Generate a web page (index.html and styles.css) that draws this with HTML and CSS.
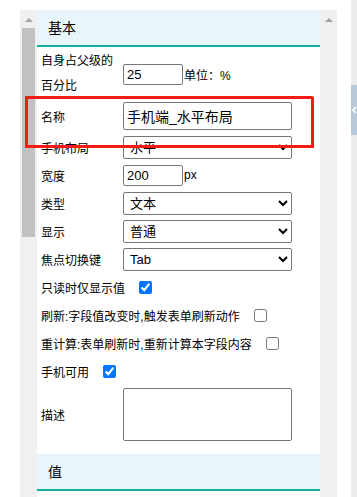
FILE: index.html
```html
<!DOCTYPE html>
<html lang="zh-CN">
<head>
    <meta charset="UTF-8">
    <title>字段属性</title>
    <link rel="stylesheet" href="styles.css">
</head>
<body>
<div class="page">
    <div class="frame">
        <div class="gutter"></div>
        <div class="scroll">
            <span class="arrow"></span>
            <span class="thumb"></span>
        </div>
        <div class="panel">
            <div class="title">基本</div>
            <div class="form">
                <div class="row row-tall">
                    <label class="label label-wrap">自身占父级的百分比</label>
                    <input class="ipt ipt-short" type="text" value="25">
                    <span class="unit">单位：%</span>
                </div>
                <div class="row row-name">
                    <label class="label">名称</label>
                    <input class="ipt ipt-name" type="text" value="手机端_水平布局">
                </div>
                <div class="row">
                    <label class="label">手机布局</label>
                    <select class="sel"><option>水平</option></select>
                </div>
                <div class="row">
                    <label class="label">宽度</label>
                    <input class="ipt ipt-short" type="text" value="200">
                    <span class="unit">px</span>
                </div>
                <div class="row">
                    <label class="label">类型</label>
                    <select class="sel"><option>文本</option></select>
                </div>
                <div class="row">
                    <label class="label">显示</label>
                    <select class="sel"><option>普通</option></select>
                </div>
                <div class="row">
                    <label class="label">焦点切换键</label>
                    <select class="sel"><option>Tab</option></select>
                </div>
                <div class="row">
                    <span class="text">只读时仅显示值</span>
                    <input class="chk" type="checkbox" checked>
                </div>
                <div class="row">
                    <span class="text">刷新:字段值改变时,触发表单刷新动作</span>
                    <input class="chk" type="checkbox">
                </div>
                <div class="row">
                    <span class="text">重计算:表单刷新时,重新计算本字段内容</span>
                    <input class="chk" type="checkbox">
                </div>
                <div class="row">
                    <span class="text">手机可用</span>
                    <input class="chk" type="checkbox" checked>
                </div>
                <div class="row row-desc">
                    <label class="label">描述</label>
                    <textarea class="area"></textarea>
                </div>
            </div>
            <div class="title">值</div>
        </div>
        <div class="scroll">
            <span class="arrow"></span>
        </div>
    </div>
    <div class="side">
        <div class="side-tab">
            <svg width="6" height="8" viewBox="0 0 6 8"><path d="M5 1L2 4l3 3" fill="none" stroke="#fff" stroke-width="1.6"/></svg>
        </div>
    </div>
</div>
<!-- 标注框 -->
<div class="mark"></div>
</body>
</html>
```

FILE: styles.css
```css
*{
    margin: 0;
    padding: 0;
    box-sizing: border-box;
}
html,body{
    width: 100%;
    height: 100%;
    overflow: hidden;
    background: #fff;
}
body{
    font-family: "Liberation Sans", "Noto Sans CJK SC", sans-serif;
    font-size: 12px;
    color: #000;
}
.page{
    display: flex;
    height: 497px;
}
.frame{
    display: flex;
    width: 337px;
    padding-top: 10px;
}
.gutter{
    width: 20px;
}
.scroll{
    width: 17px;
    background: #f0f0f0;
    display: flex;
    flex-direction: column;
    align-items: center;
}
.scroll .arrow{
    width: 0;
    height: 0;
    margin-top: 8px;
    border-left: 4px solid transparent;
    border-right: 4px solid transparent;
    border-bottom: 4px solid #a3a3a3;
}
.scroll .thumb{
    width: 13px;
    height: 209px;
    margin-top: 6px;
    background: #c1c1c1;
}
.panel{
    width: 283px;
}
.title{
    height: 37px;
    padding-left: 11px;
    line-height: 36px;
    font-size: 14px;
    background: #e8f5fb;
    border-bottom: 2px solid #13b1a1;
}
.form{
    padding: 2px 0 10px 4px;
}
.row{
    display: flex;
    align-items: center;
    height: 28px;
}
.row-tall{
    height: 50px;
}
.row-name{
    height: 34px;
}
.row-desc{
    height: 59px;
}
.label{
    width: 82px;
    flex: none;
}
.label-wrap{
    line-height: 25px;
}
.ipt,.sel,.area{
    border: 1px solid #767676;
    border-radius: 2px;
    font-family: "Liberation Sans", "Noto Sans CJK SC", sans-serif;
    color: #000;
    background: #fff;
}
.ipt{
    height: 21px;
    padding: 0 3px;
    font-size: 13px;
}
.ipt-short{
    width: 60px;
}
.ipt-name{
    width: 169px;
    height: 28px;
    font-size: 14px;
}
.sel{
    width: 169px;
    height: 23px;
    font-size: 13px;
    padding-left: 2px;
}
.area{
    width: 169px;
    height: 53px;
    resize: none;
}
.unit{
    margin-left: 1px;
}
.chk{
    width: 13px;
    height: 13px;
    margin: 0 0 0 14px;
}
.side{
    margin-left: 14px;
    width: 6px;
    background: #ececec;
}
.side-tab{
    margin-top: 85px;
    height: 50px;
    background: #b9c9dc;
    display: flex;
    align-items: center;
    justify-content: flex-end;
}
.mark{
    position: absolute;
    left: 25px;
    top: 96px;
    width: 289px;
    height: 52px;
    border: 3px solid #f41b15;
    border-radius: 0 2px 0 0;
}
```
